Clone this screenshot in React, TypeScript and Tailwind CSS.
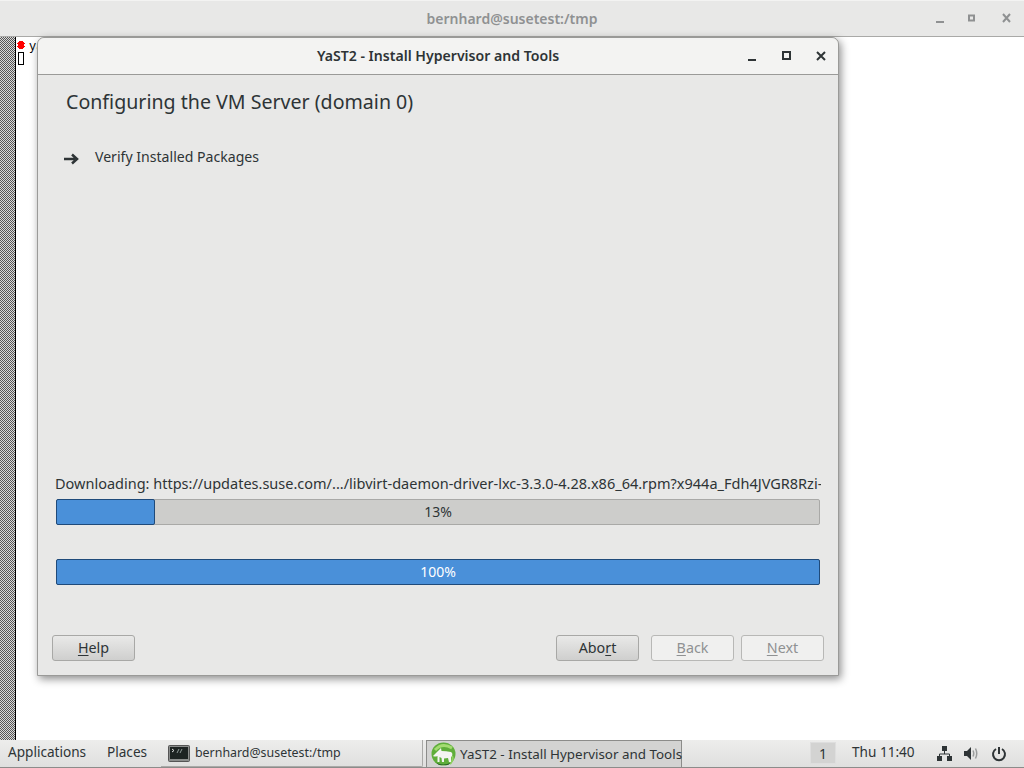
const font = "font-['Noto_Sans','Open_Sans',sans-serif]";

function DlgButton({ first, rest, pre = "", disabled = false, w }: { first: string; rest: string; pre?: string; disabled?: boolean; w: string }) {
  return (
    <div
      className={`${w} h-[26px] rounded-[3px] border flex items-center justify-center text-[14.3px] leading-none ${
        disabled
          ? "border-[#b8b8b6] bg-[#f0f0ef] text-[#8f9192]"
          : "border-[#a8a8a6] bg-gradient-to-b from-[#e9e9e8] to-[#cfcfce] text-[#2e3436]"
      }`}
    >
      <span>
        {pre}
        <span className="underline decoration-1 underline-offset-2">{first}</span>
        {rest}
      </span>
    </div>
  );
}

function Bar({ fill, label, light = false }: { fill: number; label: string; light?: boolean }) {
  return (
    <div className="relative h-[26px] w-[764px] ml-[18px] rounded-[2px] border border-[#a9a9a7] bg-[#cdcdcb]">
      <div className="h-[26px] -mt-px -ml-px bg-[#4a90d9] border border-[#1f4a7a] rounded-[2px]" style={{ width: fill }} />
      <div className={`absolute inset-0 flex items-center justify-center pb-[2px] text-[14px] ${light ? "text-white" : "text-[#2e3436]"}`}>{label}</div>
    </div>
  );
}

function YastIcon() {
  return (
    <svg width="25" height="25" viewBox="0 0 25 25" className="shrink-0">
      <ellipse cx="12.500" cy="12" rx="12" ry="11.500" fill="#5fae3a" />
      <path d="M4 8 Q11 0 21 6" stroke="#a4dc72" strokeWidth="3" fill="none" />
      <path d="M21 14 Q23 18 19 22" stroke="#8fd062" strokeWidth="2" fill="none" />
      <path d="M2 14 L7 9 L10 6 L10.500 9 Q15 9 20 10 Q22 11 21 14 L20 15 L20 20 L18 20 L17 16 L13 16.500 L13 20 L11 20 L10.500 16 L8.500 15 L8.500 20 L6.500 20 L6.500 14 Q4 15 2 14 Z" fill="#f4f4f2" />
      <path d="M5 20.500 Q12 24.500 20 20.500 L17 23 L8 23 Z" fill="#2a6628" />
    </svg>
  );
}

function TerminalIcon() {
  return (
    <svg width="22" height="17" viewBox="0 0 22 17" className="shrink-0">
      <rect x="0.500" y="0.500" width="21" height="16" rx="1" fill="#8b8d8c" stroke="#555" />
      <rect x="2" y="2" width="18" height="12" fill="#1d2322" />
      <path d="M4 4 L6 5.500 L4 7" stroke="#ddd" strokeWidth="1" fill="none" />
      <path d="M9 8 L11 4 M12 8 L14 4" stroke="#8f9a98" strokeWidth="1" />
    </svg>
  );
}

export default function App() {
  return (
    <div className={`${font} w-[1024px] h-[768px] relative overflow-hidden bg-white flex flex-col text-[#2e3436]`}>
      {/* outer terminal title bar */}
      <div className="h-[37px] shrink-0 bg-[#e8e8e7] border-b border-[#a9a9a7] border-t border-t-[#f3f3f2] flex items-center relative">
        <div className="w-full text-center text-[14px] font-semibold text-[#8f9192] pb-[1px]">bernhard@susetest:/tmp</div>
        <svg width="90" height="14" viewBox="0 0 90 14" className="absolute left-[934px] top-[11px]">
          <rect x="0" y="9" width="8" height="2" fill="#8f9192" transform="translate(2 0)" />
          <path d="M35 3.500 h5 v5 h-5 z" fill="none" stroke="#8f9192" strokeWidth="2" />
          <path d="M69 2 L76 10 M76 2 L69 10" stroke="#8f9192" strokeWidth="2" />
        </svg>
      </div>

      {/* terminal content */}
      <div className="flex-1 flex min-h-0">
        <div className="w-[16px] border-r border-black bg-[repeating-conic-gradient(#555_0_25%,#d8d8d8_0_50%)] bg-[length:2px_2px]" />
        <div className="relative flex-1 font-['Liberation_Mono',monospace] text-[12px] leading-none text-black">
          <svg width="8" height="8" viewBox="0 0 8 8" className="absolute left-[1px] top-[4px]" shapeRendering="crispEdges">
            <path d="M2 0 h4 v1 h1 v1 h1 v1 h-1 v2 h1 v1 h-1 v1 h-1 v1 h-4 v-1 h-1 v-1 h-1 v-1 h1 v-2 h-1 v-1 h1 v-1 h1 z" fill="#f00" />
          </svg>
          <div className="absolute left-[13px] top-[4px]">ya</div>
          <div className="absolute left-[2px] top-[15px] w-[6px] h-[13px] border border-black" />
        </div>
      </div>

      {/* bottom panel */}
      <div className="h-[28px] shrink-0 bg-gradient-to-b from-[#ededec] to-[#dfdfde] border-b border-[#8c8c8a] flex items-stretch text-[13.6px]">
        <div className="w-[85px] pl-[8px] flex items-center pb-[2px] text-[#2e3436]">Applications</div>
        <div className="w-[76px] pl-[22px] flex items-center pb-[2px] text-[#2e3436]">Places</div>
        <div className="w-[262px] border-b border-r border-[#a9a9a7] rounded-br-[2px] flex items-center gap-[5px] pl-[7px] text-[12.4px] shrink-0">
          <TerminalIcon />
          <span>bernhard@susetest:/tmp</span>
        </div>
        <div className="w-[3px] shrink-0" />
        <div className="w-[256px] bg-[#d3d3d2] border-t border-x border-[#8c8c8a] flex items-center gap-[4px] pl-[4px] text-[13.4px] shrink-0">
          <YastIcon />
          <span className="whitespace-nowrap">YaST2 - Install Hypervisor and Tools</span>
        </div>
        <div className="w-[128px] shrink-0" />
        <div className="w-[26px] h-[22px] mt-[2px] bg-[#d3d3d2] border border-[#dedede] flex items-center justify-center text-[14px] shrink-0">1</div>
        <div className="w-[65px] ml-[16px] flex items-center pb-[2px] whitespace-nowrap shrink-0">Thu 11:40</div>
        <div className="flex items-center gap-[11px] ml-[20px] shrink-0">
          <svg width="15" height="15" viewBox="0 0 15 15">
            <path d="M5 0 h5 v5 h-5 z M0 10 h5 v5 h-5 z M10 10 h5 v5 h-5 z" fill="#2e3436" />
            <path d="M7.500 5 v3 M2.500 10 v-2 h10 v2" stroke="#2e3436" fill="none" />
          </svg>
          <svg width="15" height="15" viewBox="0 0 15 15">
            <path d="M1 5 h3 l4 -4 v13 l-4 -4 h-3 z" fill="#2e3436" />
            <path d="M10 4.500 Q11.500 7.500 10 10.500 M12.500 2.500 Q15 7.500 12.500 12.500" stroke="#9a9c9c" strokeWidth="1.500" fill="none" />
          </svg>
          <svg width="16" height="16" viewBox="0 0 16 16" className="ml-[2px]">
            <path d="M5 3 A6 6 0 1 0 11 3" stroke="#2e3436" strokeWidth="2" fill="none" />
            <path d="M8 1 v7" stroke="#2e3436" strokeWidth="2" />
          </svg>
        </div>
      </div>

      {/* YaST window */}
      <div className="absolute left-[37px] top-[37px] w-[802px] h-[639px] rounded-t-[7px] border border-[#9a9a98] bg-[#e8e8e7] shadow-[2px_3px_9px_rgba(0,0,0,0.45)] flex flex-col">
        <div className="relative h-[37px] shrink-0 rounded-t-[7px] bg-[#f3f3f2] border-b border-[#9a9a98] flex items-center justify-center text-[14.1px] font-semibold text-[#2e3436]">
          YaST2 - Install Hypervisor and Tools
          <svg width="82" height="14" viewBox="0 0 82 14" className="absolute left-[709px] top-[12px]">
            <rect x="1" y="9" width="8" height="2" fill="#2e3436" />
            <rect x="36" y="2" width="7" height="7" fill="none" stroke="#2e3436" strokeWidth="2" />
            <path d="M70 2 L78 10 M78 2 L70 10" stroke="#2e3436" strokeWidth="2" />
          </svg>
        </div>
        <div className="flex-1 flex flex-col min-h-0">
          <div className="pl-[28px] pt-[13px] text-[19.6px] leading-[27px] text-[#2e3436]">Configuring the VM Server (domain 0)</div>
          <div className="flex items-center pl-[26px] mt-[30px] h-[24px] text-[14.1px]">
            <svg width="15" height="12" viewBox="0 0 15 12" className="mr-[16px] mt-[3px]">
              <path d="M0 6 h11 M8 1.500 L13 6 L8 10.500" stroke="#2e3436" strokeWidth="2.500" fill="none" />
            </svg>
            Verify Installed Packages
          </div>
          <div className="flex-1" />
          <div className="w-[766px] ml-[17px] overflow-hidden whitespace-nowrap text-[14.5px] leading-[20px] mb-[6px]">
            Downloading: https://updates.suse.com/.../libvirt-daemon-driver-lxc-3.3.0-4.28.x86_64.rpm?x944a_Fdh4JVGR8Rzi-7
          </div>
          <Bar fill={99} label="13%" />
          <div className="h-[34px] shrink-0" />
          <Bar fill={764} label="100%" light />
          <div className="h-[50px] shrink-0" />
          <div className="flex pl-[14px] pr-[14px] pb-[14px]">
            <DlgButton first="H" rest="elp" w="w-[83px]" />
            <div className="flex-1" />
            <DlgButton pre="Abo" first="r" rest="t" w="w-[83px]" />
            <DlgButton first="B" rest="ack" disabled w="w-[83px] ml-[12px]" />
            <DlgButton first="N" rest="ext" disabled w="w-[83px] ml-[7px]" />
          </div>
        </div>
      </div>
    </div>
  );
}
